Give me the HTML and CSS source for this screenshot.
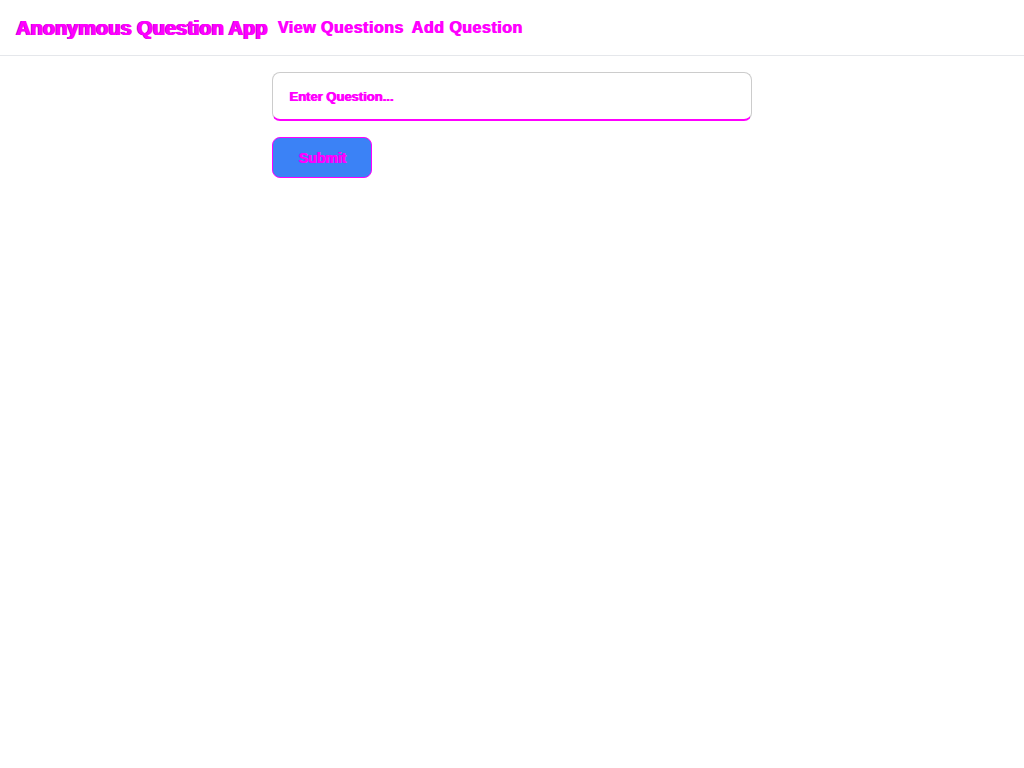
FILE: index.html
```html
<!DOCTYPE html>
<html lang="en">
<head>
<meta charset="utf-8">
<title>Anonymous Question App</title>
<link rel="stylesheet" href="styles.css">
</head>
<body>
<header class="topbar">
  <h1 class="brand">Anonymous Question App</h1>
  <nav class="nav">
    <a class="nav-link" href="#">View Questions</a>
    <a class="nav-link" href="#">Add Question</a>
  </nav>
</header>
<main class="content">
  <form class="ask-form">
    <input class="ask-input" type="text" placeholder="Enter Question...">
    <button class="ask-submit" type="button">Submit</button>
  </form>
</main>
</body>
</html>
```

FILE: styles.css
```css
* { box-sizing: border-box; }
html, body { margin: 0; padding: 0; background: #fff; }
body { font-family: "Liberation Sans", Arial, sans-serif; color: #ff00ff; }

.topbar {
  height: 56px;
  display: flex;
  align-items: center;
  gap: 10px;
  padding: 0 16px;
  border-bottom: 1px solid #e5e7eb;
}
.brand {
  margin: 0;
  font-size: 20px;
  font-weight: bold;
  color: #ff00ff;
  text-shadow: 1px 0 #ff00ff, -1px 0 #c000c0;
  padding-top: 1px;
}
.nav { display: flex; gap: 8px; }
.nav-link {
  color: #ff00ff;
  text-decoration: none;
  font-size: 16px;
  font-weight: bold;
  letter-spacing: 0.5px;
  text-shadow: 1px 0 #ff00ff;
}

.content {
  display: flex;
  justify-content: center;
  padding-top: 16px;
}
.ask-form {
  width: 480px;
  display: flex;
  flex-direction: column;
  align-items: flex-start;
  gap: 16px;
}
.ask-input {
  width: 100%;
  height: 49px;
  border: 1px solid #cccccc;
  border-bottom: 2px solid #ff00ff;
  border-radius: 8px;
  padding: 0 16px;
  font-family: "Liberation Sans", Arial, sans-serif;
  font-size: 13px;
  font-weight: bold;
  color: #ff00ff;
  outline: none;
}
.ask-input::placeholder { color: #ff00ff; opacity: 1; text-shadow: 1px 0 #ff00ff; }
.ask-submit {
  width: 100px;
  height: 41px;
  background: #3b82f6;
  border: 1px solid #ff00ff;
  border-radius: 8px;
  color: #ff00ff;
  font-family: "Liberation Sans", Arial, sans-serif;
  font-size: 14px;
  font-weight: bold;
  text-shadow: 1px 0 #ff00ff;
  cursor: pointer;
}
```
